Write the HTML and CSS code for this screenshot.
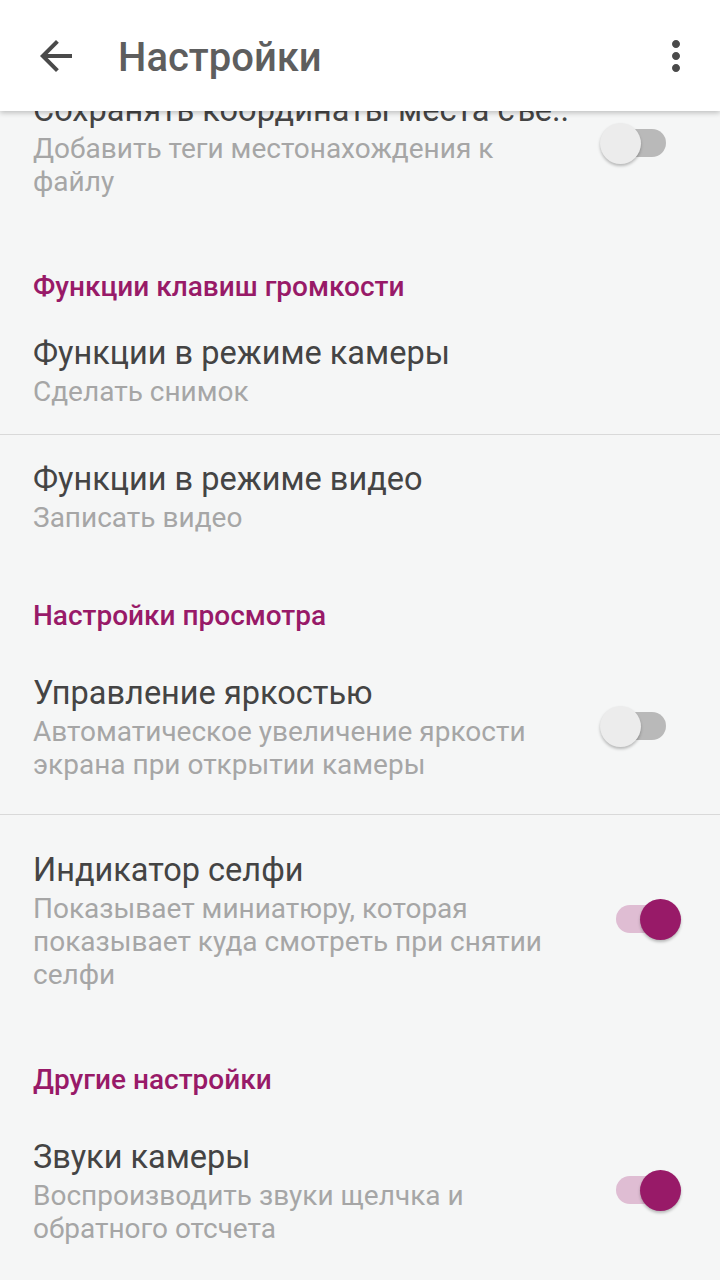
FILE: index.html
```html
<!DOCTYPE html>
<html lang="ru">
<head>
<meta charset="utf-8">
<title>Настройки</title>
<link rel="stylesheet" href="styles.css">
</head>
<body>
<div class="screen">
  <header class="appbar">
    <svg class="appbar__icon" viewBox="0 0 24 24" width="48" height="48"><path fill="#4a4a4a" d="M20 11H7.83l5.59-5.59L12 4l-8 8 8 8 1.41-1.41L7.83 13H20v-2z"/></svg>
    <h1 class="appbar__title">Настройки</h1>
    <svg class="appbar__menu" viewBox="0 0 24 24" width="48" height="48"><path fill="#4a4a4a" d="M12 8c1.1 0 2-.9 2-2s-.9-2-2-2-2 .9-2 2 .9 2 2 2zm0 2c-1.1 0-2 .9-2 2s.9 2 2 2 2-.9 2-2-.9-2-2-2zm0 6c-1.1 0-2 .9-2 2s.9 2 2 2 2-.9 2-2-.9-2-2-2z"/></svg>
  </header>

  <main class="list">
    <div class="pref">
      <div class="pref__text">
        <div class="pref__title">Сохранять координаты места съе..</div>
        <div class="pref__summary">Добавить теги местонахождения к файлу</div>
      </div>
      <div class="switch"><span class="switch__track"></span><span class="switch__thumb"></span></div>
    </div>

    <div class="category">Функции клавиш громкости</div>
    <div class="pref pref--tight pref--divider">
      <div class="pref__text">
        <div class="pref__title">Функции в режиме камеры</div>
        <div class="pref__summary">Сделать снимок</div>
      </div>
    </div>
    <div class="pref pref--tight">
      <div class="pref__text">
        <div class="pref__title">Функции в режиме видео</div>
        <div class="pref__summary">Записать видео</div>
      </div>
    </div>

    <div class="category">Настройки просмотра</div>
    <div class="pref pref--divider">
      <div class="pref__text">
        <div class="pref__title">Управление яркостью</div>
        <div class="pref__summary">Автоматическое увеличение яркости экрана при открытии камеры</div>
      </div>
      <div class="switch"><span class="switch__track"></span><span class="switch__thumb"></span></div>
    </div>
    <div class="pref">
      <div class="pref__text">
        <div class="pref__title">Индикатор селфи</div>
        <div class="pref__summary">Показывает миниатюру, которая показывает куда смотреть при снятии селфи</div>
      </div>
      <div class="switch switch--on"><span class="switch__track"></span><span class="switch__thumb"></span></div>
    </div>

    <div class="category">Другие настройки</div>
    <div class="pref">
      <div class="pref__text">
        <div class="pref__title">Звуки камеры</div>
        <div class="pref__summary">Воспроизводить звуки щелчка и обратного отсчета</div>
      </div>
      <div class="switch switch--on"><span class="switch__track"></span><span class="switch__thumb"></span></div>
    </div>
  </main>
</div>
</body>
</html>
```

FILE: styles.css
```css
* { box-sizing: border-box; }

html, body {
  margin: 0;
  padding: 0;
  background: #f5f6f6;
  font-family: Roboto, "Noto Sans", sans-serif;
}

.screen {
  width: 720px;
  height: 1280px;
  overflow: hidden;
  background: #f5f6f6;
}

.appbar {
  position: relative;
  z-index: 2;
  height: 111px;
  background: #ffffff;
  display: flex;
  align-items: center;
  padding: 0 20px 0 32px;
  box-shadow: 0 2px 5px rgba(0, 0, 0, 0.22);
}

.appbar__icon { flex: none; display: block; }

.appbar__title {
  flex: 1;
  margin: 0 0 0 38px;
  font-size: 40px;
  font-weight: 500;
  color: #5e5e5e;
  line-height: 48px;
  padding-top: 4px;
}

.appbar__menu { flex: none; display: block; }

.list {
  position: relative;
  z-index: 1;
  margin-top: -56px;
}

.pref {
  display: flex;
  align-items: center;
  padding: 33px 39px 33px 33px;
}

.pref--tight { padding-top: 22px; padding-bottom: 26px; }

.pref--divider { border-bottom: 1px solid #d9d9d9; }

.pref__text {
  flex: 1;
  min-width: 0;
  max-width: 530px;
}

.pref__title {
  font-size: 32.5px;
  line-height: 44px;
  color: #444444;
  white-space: nowrap;
}

.pref__summary {
  font-size: 28px;
  line-height: 33px;
  color: #a6a6a6;
}

.category {
  padding: 36px 33px 2px;
  font-size: 28px;
  line-height: 40px;
  font-weight: 500;
  color: #981a68;
}

.switch {
  position: relative;
  flex: none;
  width: 81px;
  height: 41px;
  margin-left: auto;
}

.switch__track {
  position: absolute;
  left: 16px;
  top: 6px;
  width: 50px;
  height: 28px;
  border-radius: 14px;
  background: #b9b9b9;
}

.switch__thumb {
  position: absolute;
  left: 0;
  top: 0;
  width: 41px;
  height: 41px;
  border-radius: 50%;
  background: #ececec;
  box-shadow: 0 2px 3px rgba(0, 0, 0, 0.25);
}

.switch--on .switch__track { background: #dfbdd3; }
.switch--on .switch__thumb { left: 40px; background: #981a68; }
```
